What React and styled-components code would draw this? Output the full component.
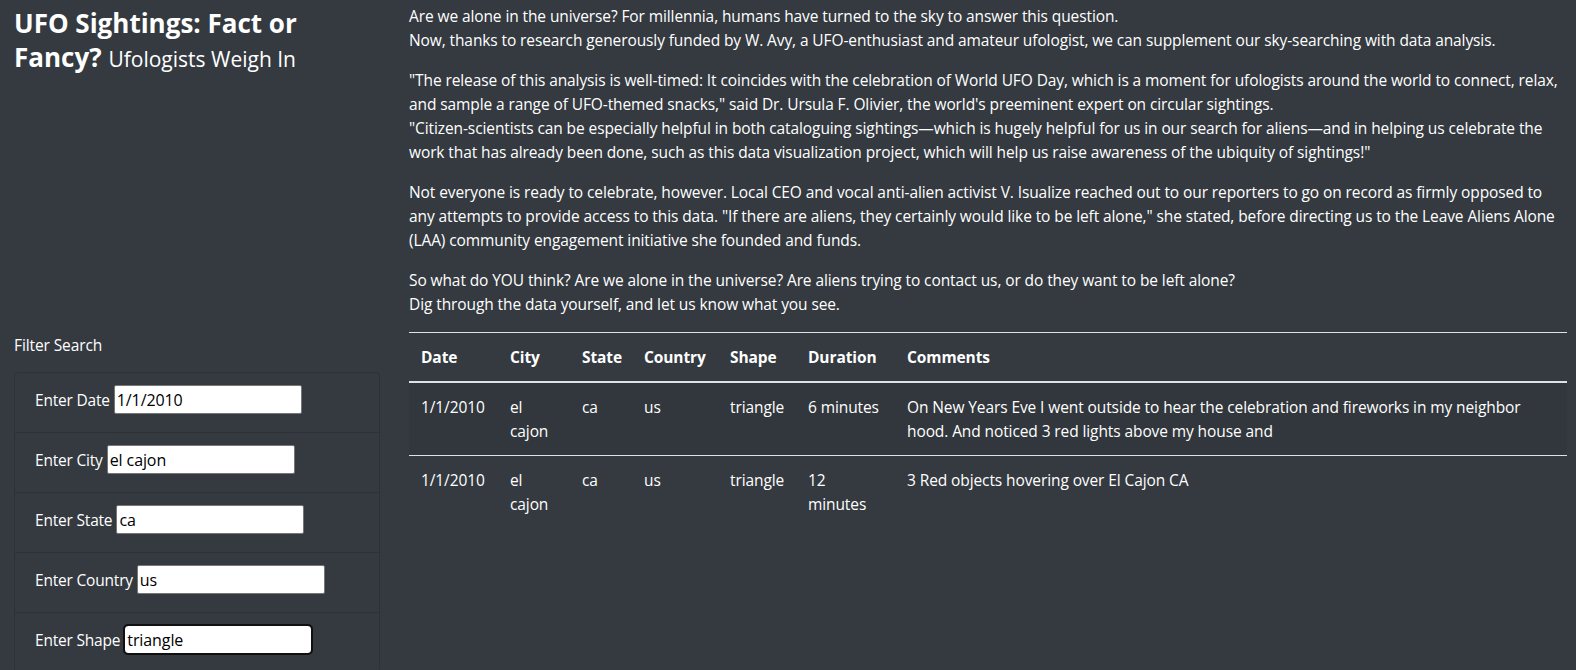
import React from "react";
import styled, { createGlobalStyle } from "styled-components";

const Global = createGlobalStyle`
  html, body { margin: 0; padding: 0; background: #343a40; }
  body {
    font-family: "Open Sans", "Noto Sans", sans-serif;
    font-size: 15.5px;
    line-height: 24px;
    letter-spacing: -0.1px;
    color: #fff;
  }
  *, *::before, *::after { box-sizing: border-box; }
`;

const Page = styled.div`
  display: grid;
  grid-template-columns: 394px 1fr;
  grid-template-rows: auto auto;
  min-height: 670px;
`;

const Side = styled.div`
  padding: ${(p) => p.$top}px 14px 0 14px;
`;

const Main = styled.div`
  padding: ${(p) => p.$top}px 9px 0 15px;
`;

const Title = styled.h1`
  margin: 0;
  max-width: 350px;
  font-size: 26px;
  font-weight: 700;
  line-height: 34px;
  letter-spacing: 0;
`;

const Sub = styled.small`
  font-size: 21px;
  font-weight: 400;
`;

const Para = styled.p`
  margin: 0 0 16px;
`;

const FilterHeading = styled.div`
  padding-top: 1px;
  margin-bottom: 15px;
`;

const List = styled.ul`
  list-style: none;
  margin: 0;
  padding: 0;
  border: 1px solid rgba(0, 0, 0, 0.125);
  border-radius: 4px;
`;

const Item = styled.li`
  display: flex;
  align-items: center;
  gap: 4px;
  padding: 12px 20px 18px;
  border-top: ${(p) => (p.$first ? "none" : "1px solid rgba(0, 0, 0, 0.125)")};
`;

const Label = styled.label`
  white-space: nowrap;
  letter-spacing: -0.2px;
`;

const Input = styled.input`
  width: 188px;
  height: 29px;
  padding: 1px 2px;
  border: 1px solid #767676;
  border-radius: 2px;
  background: #fff;
  color: #000;
  font: inherit;
  font-size: 16px;
  letter-spacing: -0.1px;
  outline: ${(p) => (p.$focused ? "2px solid #101010" : "none")};
  outline-offset: -1px;
  ${(p) => (p.$focused ? "border-radius: 4px;" : "")}
`;

const Table = styled.table`
  width: 100%;
  border-collapse: collapse;
  table-layout: fixed;
`;

const Th = styled.th`
  width: ${(p) => (p.$w ? `${p.$w}px` : "auto")};
  padding: 12px;
  text-align: left;
  vertical-align: bottom;
  font-weight: 700;
  border-top: 1px solid #dee2e6;
  border-bottom: 2px solid #dee2e6;
`;

const Tr = styled.tr`
  background: ${(p) => (p.$striped ? "rgba(0, 0, 0, 0.05)" : "transparent")};
`;

const Td = styled.td`
  padding: 12px ${(p) => (p.$wide ? 30 : 12)}px 12px 12px;
  vertical-align: top;
  border-top: ${(p) => (p.$noBorder ? "none" : "1px solid #dee2e6")};
`;

const filters = [
  { label: "Enter Date", value: "1/1/2010" },
  { label: "Enter City", value: "el cajon" },
  { label: "Enter State", value: "ca" },
  { label: "Enter Country", value: "us" },
  { label: "Enter Shape", value: "triangle", focused: true },
];

const columns = [
  { name: "Date", w: 89 },
  { name: "City", w: 72 },
  { name: "State", w: 62 },
  { name: "Country", w: 86 },
  { name: "Shape", w: 78 },
  { name: "Duration", w: 99 },
  { name: "Comments" },
];

const rows = [
  ["1/1/2010", "el cajon", "ca", "us", "triangle", "6 minutes", "On New Years Eve I went outside to hear the celebration and fireworks in my neighbor hood. And noticed 3 red lights above my house and"],
  ["1/1/2010", "el cajon", "ca", "us", "triangle", "12 minutes", "3 Red objects hovering over El Cajon CA"],
];

export default function App() {
  return (
    <>
      <Global />
      <Page>
        <Side $top={6}>
          <Title>
            UFO Sightings: Fact or Fancy? <Sub>Ufologists Weigh In</Sub>
          </Title>
        </Side>
        <Main $top={4}>
          <Para>
            Are we alone in the universe? For millennia, humans have turned to the sky to answer this question.
            <br />
            Now, thanks to research generously funded by W. Avy, a UFO-enthusiast and amateur ufologist, we can supplement our sky-searching with data analysis.
          </Para>
          <Para>
            "The release of this analysis is well-timed: It coincides with the celebration of World UFO Day, which is a moment for ufologists around the world to connect, relax, and sample a range of UFO-themed snacks," said Dr. Ursula F. Olivier, the world's preeminent expert on circular sightings.
            <br />
            "Citizen-scientists can be especially helpful in both cataloguing sightings—which is hugely helpful for us in our search for aliens—and in helping us celebrate the work that has already been done, such as this data visualization project, which will help us raise awareness of the ubiquity of sightings!"
          </Para>
          <Para>
            Not everyone is ready to celebrate, however. Local CEO and vocal anti-alien activist V. Isualize reached out to our reporters to go on record as firmly opposed to any attempts to provide access to this data. "If there are aliens, they certainly would like to be left alone," she stated, before directing us to the Leave Aliens Alone (LAA) community engagement initiative she founded and funds.
          </Para>
          <Para>
            So what do YOU think? Are we alone in the universe? Are aliens trying to contact us, or do they want to be left alone?
            <br />
            Dig through the data yourself, and let us know what you see.
          </Para>
        </Main>
        <Side $top={0}>
          <FilterHeading>Filter Search</FilterHeading>
          <List>
            {filters.map((f, i) => (
              <Item key={f.label} $first={i === 0}>
                <Label>{f.label}</Label>
                <Input type="text" defaultValue={f.value} $focused={f.focused} />
              </Item>
            ))}
          </List>
        </Side>
        <Main $top={0}>
          <Table>
            <thead>
              <tr>
                {columns.map((c) => (
                  <Th key={c.name} $w={c.w}>{c.name}</Th>
                ))}
              </tr>
            </thead>
            <tbody>
              {rows.map((r, i) => (
                <Tr key={i} $striped={i % 2 === 0}>
                  {r.map((cell, j) => (
                    <Td key={j} $noBorder={i === 0} $wide={j === r.length - 1}>{cell}</Td>
                  ))}
                </Tr>
              ))}
            </tbody>
          </Table>
        </Main>
      </Page>
    </>
  );
}
